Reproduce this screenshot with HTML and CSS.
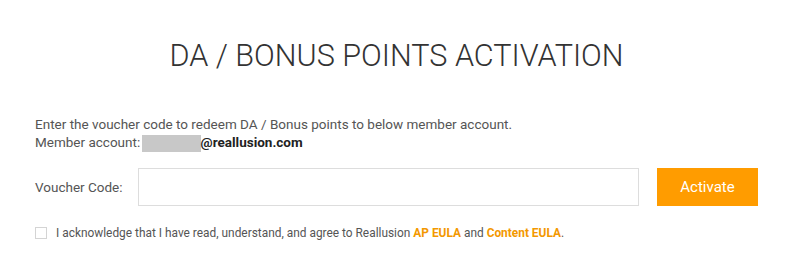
FILE: index.html
```html
<!DOCTYPE html>
<html>
<head>
<meta charset="utf-8">
<link rel="stylesheet" href="styles.css">
</head>
<body>
<div class="page">
  <h1 class="title">DA / BONUS POINTS ACTIVATION</h1>
  <p class="intro">Enter the voucher code to redeem DA / Bonus points to below member account.<br>
  Member account: <span class="mask"></span><b class="email">@reallusion.com</b></p>
  <div class="form-row">
    <label class="label">Voucher Code:</label>
    <input class="input" type="text">
    <button class="btn">Activate</button>
  </div>
  <div class="agree">
    <span class="box"></span>
    <span>I acknowledge that I have read, understand, and agree to Reallusion <a class="link">AP EULA</a> and <a class="link">Content EULA</a>.</span>
  </div>
</div>
</body>
</html>
```
FILE: styles.css
```css
html, body { margin: 0; padding: 0; background: #fff; }
body { font-family: Roboto, "Noto Sans", sans-serif; color: #555; font-size: 13.5px; }
.page { width: 723px; padding: 0 0 0 35px; }
.title { margin: 0; padding-top: 38px; text-align: center; font-weight: 300; font-size: 30.6px; line-height: 36px; color: #333; }
.intro { margin: 41px 0 0; line-height: 18px; }
.mask { display: inline-block; width: 59px; height: 17px; background: #c8c8c8; vertical-align: -5px; margin-left: -2px; }
.email { color: #222; font-weight: 700; }
.form-row { display: flex; align-items: center; margin-top: 16px; }
.label { width: 103px; }
.input { width: 501px; height: 38px; box-sizing: border-box; border: 1px solid #ddd; margin: 0; padding: 0 10px; }
.btn { margin-left: 18px; width: 101px; height: 38px; border: 0; background: #ff9c00; color: #fff; font-family: Roboto, sans-serif; font-size: 15px; cursor: pointer; padding: 0; }
.agree { display: flex; align-items: center; margin-top: 19px; font-size: 11.9px; line-height: 16px; }
.box { width: 10px; height: 10px; border: 1px solid #d4d4d4; margin-right: 9px; flex: none; }
.link { color: #f39800; font-weight: 700; }
```
